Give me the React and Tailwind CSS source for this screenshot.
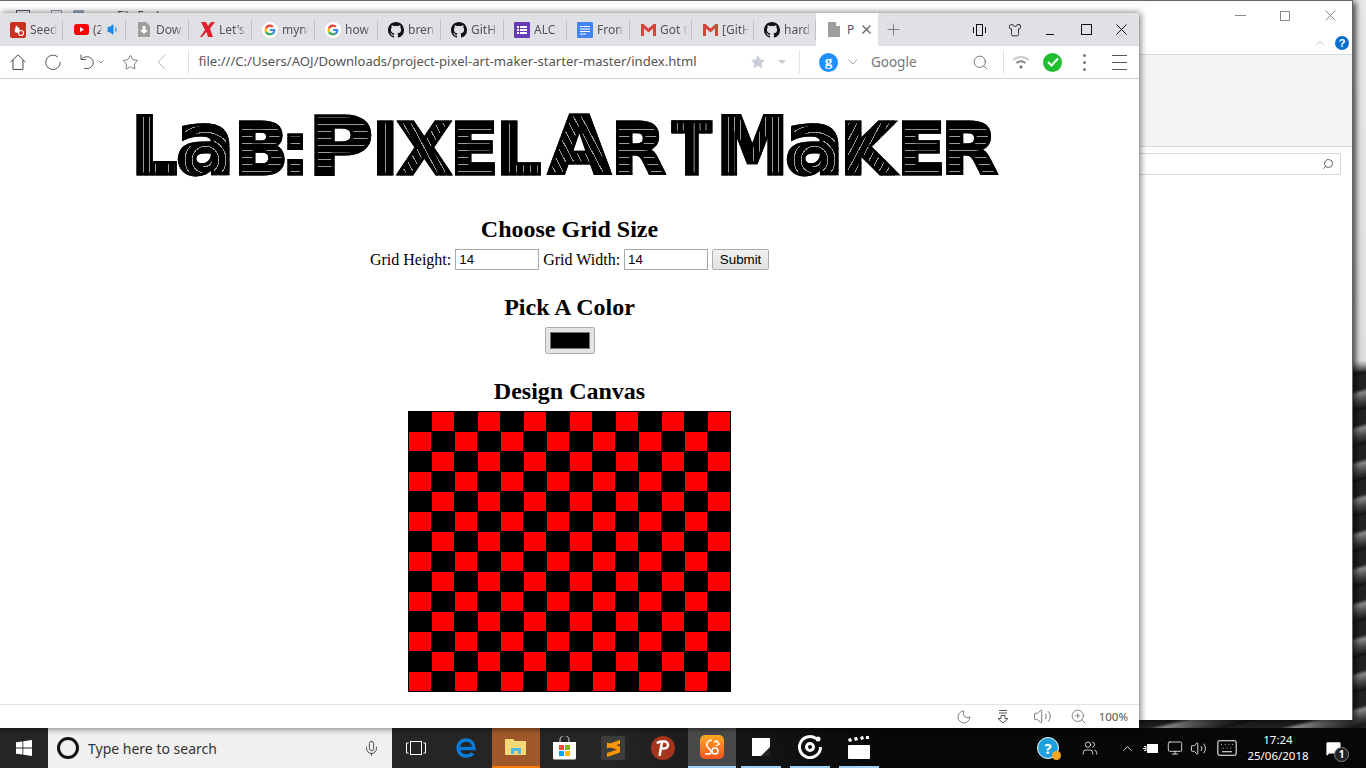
import React from "react";
import {
  Star, ChevronDown, ChevronUp, Search, Plus,
  Shirt, Moon, Volume1, Volume2, ZoomIn, Mic, Users, Keyboard, MessageSquare, Monitor,
} from "lucide-react";

function GoogleIcon() {
  return (
    <svg width="16" height="16" viewBox="0 0 24 24">
      <circle cx="12" cy="12" r="12" fill="#fff" />
      <path d="M20 12.200c0-.6 0-1.100-.1-1.600H12v3h4.500a3.900 3.900 0 0 1-1.700 2.500l2.700 2.100c1.600-1.400 2.500-3.500 2.500-6z" fill="#4285f4" />
      <path d="M12 20c2.200 0 4-.7 5.500-1.900l-2.700-2.100c-.7.500-1.700.8-2.800.8-2.100 0-3.900-1.400-4.600-3.400l-2.800 2.200C6 18.300 8.800 20 12 20z" fill="#34a853" />
      <path d="M7.400 13.400a4.800 4.800 0 0 1 0-3l-2.800-2.200a8 8 0 0 0 0 7.400z" fill="#fbbc05" />
      <path d="M12 7.200c1.200 0 2.300.4 3.100 1.200l2.400-2.400A8 8 0 0 0 4.600 8.300l2.800 2.200c.7-1.900 2.500-3.300 4.600-3.300z" fill="#ea4335" />
    </svg>
  );
}

function GithubIcon() {
  return (
    <svg width="16" height="16" viewBox="0 0 16 16" fill="#111">
      <path d="M8 0C3.580 0 0 3.580 0 8c0 3.540 2.290 6.530 5.470 7.590.4.070.55-.17.55-.38 0-.19-.01-.82-.01-1.490-2.010.37-2.530-.49-2.690-.94-.09-.23-.48-.94-.82-1.130-.28-.15-.68-.52-.01-.53.63-.01 1.080.58 1.230.82.720 1.210 1.870.870 2.330.660.070-.520.280-.870.510-1.070-1.780-.200-3.640-.890-3.640-3.950 0-.870.310-1.590.820-2.150-.080-.200-.360-1.020.080-2.120 0 0 .670-.210 2.200.820a7.500 7.500 0 0 1 4 0c1.530-1.040 2.200-.820 2.200-.820.440 1.100.160 1.920.080 2.120.510.560.820 1.270.820 2.150 0 3.070-1.870 3.750-3.650 3.950.290.250.540.730.540 1.480 0 1.070-.010 1.930-.010 2.200 0 .210.150.460.550.380A8.010 8.010 0 0 0 16 8c0-4.420-3.580-8-8-8z" />
    </svg>
  );
}

function GmailIcon() {
  return (
    <svg width="15" height="12" viewBox="0 0 15 12">
      <path d="M0 0h2.500L7.500 4.500 12.500 0H15v12h-3V4.500L7.500 8.500 3 4.500V12H0z" fill="#d44638" />
    </svg>
  );
}

function SeedrIcon() {
  return (
    <svg width="16" height="16" viewBox="0 0 16 16">
      <rect width="16" height="16" rx="2" fill="#c8321e" />
      <path d="M6 3c1 2 4 3 4 5a3 3 0 0 1-5 2c-1-2 1-4 1-7z" fill="#fff" />
      <circle cx="11" cy="11" r="2.500" fill="none" stroke="#fff" strokeWidth="1.200" />
    </svg>
  );
}

function YoutubeIcon() {
  return (
    <svg width="15" height="11" viewBox="0 0 15 11">
      <rect width="15" height="11" rx="3" fill="#f00" />
      <path d="M6 3l4 2.500L6 8z" fill="#fff" />
    </svg>
  );
}

function DownloadIcon() {
  return (
    <svg width="12" height="15" viewBox="0 0 12 15">
      <path d="M0 0h8l4 4v11H0z" fill="#9e9e9e" />
      <path d="M4.500 4h3v4H10l-4 4-4-4h2.500z" fill="#fff" />
    </svg>
  );
}

function LetsIcon() {
  return (
    <svg width="15" height="15" viewBox="0 0 15 15">
      <path d="M1 0h5l2 4 3-4h4l-5 6.500L13 15H8L6.500 10 2 15H0l5-7z" fill="#e0202c" />
    </svg>
  );
}

function ListIcon() {
  return (
    <svg width="16" height="16" viewBox="0 0 16 16">
      <rect width="16" height="16" rx="1" fill="#673ab7" />
      <path d="M3 4h2v2H3zM6 4h7v2H6zM3 7h2v2H3zM6 7h7v2H6zM3 10h2v2H3zM6 10h7v2H6z" fill="#fff" />
    </svg>
  );
}

function DocsIcon() {
  return (
    <svg width="16" height="16" viewBox="0 0 16 16">
      <rect width="16" height="16" rx="1" fill="#4285f4" />
      <path d="M3 4.500h10M3 7h10M3 9.500h10M3 12h6" stroke="#fff" />
    </svg>
  );
}

const tabs = [
  { label: "Seedr", icon: <SeedrIcon />, w: "w-[63px]" },
  { label: "(2", icon: <YoutubeIcon />, w: "w-[63px]", sound: true },
  { label: "Downl", icon: <DownloadIcon />, w: "w-[63px]" },
  { label: "Let's", icon: <LetsIcon />, w: "w-[63px]" },
  { label: "mynt", icon: <GoogleIcon />, w: "w-[63px]" },
  { label: "how", icon: <GoogleIcon />, w: "w-[63px]" },
  { label: "brend", icon: <GithubIcon />, w: "w-[63px]" },
  { label: "GitHu", icon: <GithubIcon />, w: "w-[63px]" },
  { label: "ALC", icon: <ListIcon />, w: "w-[63px]" },
  { label: "Front", icon: <DocsIcon />, w: "w-[63px]" },
  { label: "Got t", icon: <GmailIcon />, w: "w-[62px]" },
  { label: "[GitH", icon: <GmailIcon />, w: "w-[62px]" },
  { label: "hard", icon: <GithubIcon />, w: "w-[62px]" },
];

function Tab({ label, icon, sound, w }) {
  return (
    <div className={"h-full flex items-center shrink-0 relative pl-[10px] " + w}>
      <div className="w-4 flex items-center justify-center shrink-0">{icon}</div>
      <span className={"ml-[4px] overflow-hidden whitespace-nowrap text-[12px] text-[#555] [mask-image:linear-gradient(to_right,black_75%,transparent)] " + (sound ? "w-[9px]" : "w-[27px]")}>
        {label}
      </span>
      {sound && <Volume1 size={13} className="ml-[5px] text-[#1e88e5]" fill="#1e88e5" />}
      <div className="absolute right-0 top-[7px] h-[20px] w-px bg-[#bfc1c5]" />
    </div>
  );
}

// title letters: box width sets where the next letter starts, stripes run the way the strokes do
const H = "bg-[repeating-linear-gradient(0deg,#000_0,#000_6px,#999_6px,#999_7px)]";
const V = "bg-[repeating-linear-gradient(90deg,#000_0,#000_6px,#999_6px,#999_7px)]";
const D = "bg-[repeating-linear-gradient(62deg,#000_0,#000_6px,#999_6px,#999_7px)]";
const B = "bg-[repeating-linear-gradient(-62deg,#000_0,#000_6px,#999_6px,#999_7px)]";
const C = "bg-[repeating-radial-gradient(circle_at_50%_68%,#000_0,#000_6px,#999_6px,#999_7px)]";

const titleLetters = [
  { ch: "L", box: "w-[44.5px]", text: "text-[81px] scale-x-[0.9]", fill: V },
  { ch: "a", box: "w-[58.5px]", text: "text-[88px]", fill: C },
  { ch: "B", box: "w-[47px]", text: "text-[71px]", fill: H },
  { ch: ":", box: "w-[27px]", text: "text-[71px]", fill: H },
  { ch: "P", box: "w-[64px]", text: "text-[81px] scale-x-[1.1]", fill: H },
  { ch: "I", box: "w-[25px]", text: "text-[71px]", fill: V },
  { ch: "X", box: "w-[53px]", text: "text-[71px]", fill: D },
  { ch: "E", box: "w-[46px]", text: "text-[71px]", fill: H },
  { ch: "L", box: "w-[52px]", text: "text-[71px]", fill: V },
  { ch: "A", box: "w-[63px]", text: "text-[81px]", fill: D },
  { ch: "R", box: "w-[61px]", text: "text-[71px]", fill: H },
  { ch: "T", box: "w-[44px]", text: "text-[71px] scale-x-[0.82]", fill: V },
  { ch: "M", box: "w-[68.5px]", text: "text-[81px] scale-x-[0.9]", fill: V },
  { ch: "a", box: "w-[55.5px]", text: "text-[88px]", fill: C },
  { ch: "K", box: "w-[57px]", text: "text-[71px]", fill: B },
  { ch: "E", box: "w-[44px]", text: "text-[71px]", fill: H },
  { ch: "R", box: "w-[60px]", text: "text-[71px] scale-x-[1.04]", fill: H },
];

function Title() {
  return (
    <h1 className="w-full h-[88px] pl-[131px] flex items-baseline font-['DejaVu_Sans',sans-serif] font-bold leading-none">
      {titleLetters.map((l, i) => (
        <span key={i} className={"shrink-0 " + l.box}>
          <span className={"inline-block origin-left leading-none bg-clip-text text-transparent [-webkit-text-stroke:3px_#000] " + l.text + " " + l.fill}>
            {l.ch}
          </span>
        </span>
      ))}
    </h1>
  );
}

function Board() {
  const cells = [];
  for (let r = 0; r < 14; r++) {
    for (let c = 0; c < 14; c++) {
      cells.push(<div key={r + "-" + c} className={(r + c) % 2 ? "bg-[#f00]" : "bg-black"} />);
    }
  }
  return (
    <div className="grid grid-cols-[repeat(14,22px)] grid-rows-[repeat(14,19px)] gap-px p-px bg-black w-[323px] h-[281px] mx-auto">
      {cells}
    </div>
  );
}

function Page() {
  return (
    <div className="flex-1 bg-white flex flex-col items-center font-['Liberation_Serif',serif] text-black pt-[21px]">
      <Title />
      <h2 className="mt-[28px] text-[24px] font-bold leading-[27px]">Choose Grid Size</h2>
      <div className="mt-[6px] flex items-center h-[21px] text-[16px]">
        <span>Grid Height:</span>
        <input readOnly value="14" className="ml-[4px] w-[84px] h-[21px] border border-[#a9a9a9] px-[3px] text-[13.33px] font-['Liberation_Sans',sans-serif] outline-none" />
        <span className="ml-[4px]">Grid Width:</span>
        <input readOnly value="14" className="ml-[4px] w-[84px] h-[21px] border border-[#a9a9a9] px-[3px] text-[13.33px] font-['Liberation_Sans',sans-serif] outline-none" />
        <button className="ml-[4px] w-[57px] h-[21px] border border-[#adadad] rounded-[2px] bg-gradient-to-b from-[#f0f0f0] to-[#e2e2e2] text-[13.33px] font-['Liberation_Sans',sans-serif]">
          Submit
        </button>
      </div>
      <h2 className="mt-[24px] text-[24px] font-bold leading-[27px]">Pick A Color</h2>
      <div className="mt-[6px] w-[50px] h-[27px] border border-[#adadad] rounded-[2px] bg-[#e4e4e4] p-[4px]">
        <div className="w-full h-full bg-black border border-[#777]" />
      </div>
      <h2 className="mt-[24px] text-[24px] font-bold leading-[27px]">Design Canvas</h2>
      <div className="mt-[6px]">
        <Board />
      </div>
    </div>
  );
}

function Toolbar() {
  return (
    <div className="h-[33px] shrink-0 bg-white border-b border-[#cfcdcf] flex items-center text-[#444] pr-[12px]">
      <svg width="16" height="16" viewBox="0 0 16 16" fill="none" stroke="#444" className="ml-[10px]">
        <path d="M.5 8L8 .8 15.500 8M3 6v9.500h10V6" />
      </svg>
      <svg width="16" height="16" viewBox="0 0 16 16" fill="none" stroke="#555" className="ml-[19px]">
        <path d="M13 3a7.300 7.300 0 1 0 2.300 5" />
      </svg>
      <svg width="15" height="16" viewBox="0 0 15 16" fill="none" stroke="#555" className="ml-[19px]">
        <path d="M1 .5v5h5M1 5.500C3 3.500 5 2.500 7.500 2.800a5.800 5.800 0 0 1 0 11.700H4" />
      </svg>
      <ChevronDown size={8} className="ml-[2px]" />
      <Star size={17} strokeWidth={1} className="ml-[17px]" />
      <svg width="9" height="16" viewBox="0 0 9 16" fill="none" stroke="#bbb" className="ml-[18px]">
        <path d="M8.500.5L1 8l7.500 7.500" />
      </svg>
      <div className="ml-[22px] h-[24px] w-px bg-[#e2e2e4]" />
      <span className="ml-[10px] w-[555px] text-[13.1px] text-[#555] whitespace-nowrap">
        file:///C:/Users/AOJ/Downloads/project-pixel-art-maker-starter-master/index.html
      </span>
      <Star size={16} fill="#c9ccd6" strokeWidth={0} />
      <div className="ml-[12px] w-0 h-0 border-x-[4px] border-x-transparent border-t-[4px] border-t-[#ccc]" />
      <div className="ml-[13px] h-[24px] w-px bg-[#e2e2e4]" />
      <div className="ml-[19px] w-[19px] h-[19px] rounded-full bg-[#1e90ff] text-white flex items-center justify-center font-['Liberation_Serif',serif] font-bold text-[15px] leading-none pb-[2px]">
        g
      </div>
      <ChevronDown size={16} strokeWidth={1.200} className="ml-[7px] text-[#888]" />
      <span className="ml-[10px] w-[102px] text-[13.5px] text-[#777]">Google</span>
      <Search size={17} strokeWidth={1} />
      <div className="ml-[14px] h-[24px] w-px bg-[#e2e2e4]" />
      <svg width="18" height="14" viewBox="0 0 18 14" fill="none" className="ml-[8px]">
        <path d="M1 5a12 12 0 0 1 16 0" stroke="#ccc" strokeWidth="2" />
        <path d="M4.500 8a7 7 0 0 1 9 0" stroke="#888" strokeWidth="2" />
        <circle cx="9" cy="12" r="1.500" fill="#666" />
      </svg>
      <div className="ml-[13px] w-[19px] h-[19px] rounded-full bg-[#1fbf30] flex items-center justify-center">
        <svg width="12" height="10" viewBox="0 0 12 10" fill="none">
          <path d="M1 5l3.500 3.500L11 1.500" stroke="#fff" strokeWidth="2" />
        </svg>
      </div>
      <div className="ml-[21px] flex flex-col gap-[4px]">
        <div className="w-[3px] h-[3px] rounded-full bg-[#777]" />
        <div className="w-[3px] h-[3px] rounded-full bg-[#777]" />
        <div className="w-[3px] h-[3px] rounded-full bg-[#777]" />
      </div>
      <div className="ml-[26px] flex flex-col gap-[6px]">
        <div className="w-[15px] h-px bg-[#555]" />
        <div className="w-[15px] h-px bg-[#555]" />
        <div className="w-[15px] h-px bg-[#555]" />
      </div>
    </div>
  );
}

function TabBar() {
  return (
    <div className="h-[33px] shrink-0 bg-[#dfe1e5] flex items-stretch">
      {tabs.map((t, i) => (
        <Tab key={i} {...t} />
      ))}
      <div className="w-[62px] bg-white flex items-center pl-[12px] shrink-0">
        <svg width="12" height="15" viewBox="0 0 12 15">
          <path d="M0 0h8l4 4v11H0z" fill="#9e9e9e" />
          <path d="M8 0v4h4z" fill="#fff" />
        </svg>
        <span className="ml-[7px] w-[8px] text-[12px] text-[#555]">P</span>
        <svg width="9" height="9" viewBox="0 0 9 9" fill="none" stroke="#666" strokeWidth="1.300" className="ml-[7px]">
          <path d="M.5.5l8 8M8.500.5l-8 8" />
        </svg>
      </div>
      <Plus size={19} strokeWidth={1} className="ml-[6px] self-center text-[#666]" />
      <div className="ml-auto flex items-center text-[#111]">
        <svg width="13" height="12" viewBox="0 0 13 12" fill="none" stroke="#111">
          <rect x="3.500" y=".5" width="6" height="11" />
          <path d="M.5 3v6M12.500 3v6" />
        </svg>
        <Shirt size={14} strokeWidth={1.400} className="ml-[22px]" />
        <div className="ml-[24px] w-[8px] h-px bg-[#111] mt-[9px]" />
        <div className="ml-[27px] w-[11px] h-[11px] border border-[#111]" />
        <svg width="11" height="11" viewBox="0 0 11 11" fill="none" stroke="#111" className="ml-[24px] mr-[12px]">
          <path d="M.5.5l10 10M10.500.5l-10 10" />
        </svg>
      </div>
    </div>
  );
}

function StatusBar() {
  return (
    <div className="h-[24px] shrink-0 bg-white border-t border-[#e3e3e3] flex items-center justify-end pr-[11px] text-[#555]">
      <Moon size={16} strokeWidth={1.100} />
      <svg width="14" height="14" viewBox="0 0 14 14" fill="none" stroke="#555" className="ml-[24px]">
        <path d="M3 .5h8M3 3h8M5 5.500h4v3h3L7 13 2 8.500h3z" />
      </svg>
      <Volume2 size={19} strokeWidth={1} className="ml-[23px]" />
      <ZoomIn size={17} strokeWidth={1} className="ml-[18px]" />
      <span className="ml-[12px] text-[11.500px] text-[#555]">100%</span>
    </div>
  );
}

function Explorer() {
  return (
    <div className="absolute left-0 top-0 w-[1353px] h-[720px] bg-white border-t border-[#666] border-r shadow-[3px_2px_6px_rgba(0,0,0,0.7)] flex flex-col">
      <div className="h-[54px] border-b border-[#d9d9d9] text-[#888] flex flex-col">
        <div className="flex items-center justify-between h-[29px] pr-[3px]">
          <div className="flex items-center text-[11px] text-[#555] pl-[16px]">
            <div className="w-[14px] h-[12px] border border-[#557]" />
            <div className="ml-[21px] w-[11px] h-[12px] border border-[#99a]" />
            <div className="ml-[11px] w-[11px] h-[12px] bg-[#9ab]" />
            <span className="ml-[33px]">File Explorer</span>
          </div>
          <div className="flex items-center">
            <div className="w-[11px] h-px bg-[#888] mr-[34px]" />
            <div className="w-[10px] h-[10px] border border-[#888] mr-[35px]" />
            <svg width="11" height="11" viewBox="0 0 11 11" fill="none" stroke="#888" className="mr-[13px]">
              <path d="M.5.5l10 10M10.500.5l-10 10" />
            </svg>
          </div>
        </div>
        <div className="flex items-center justify-end pr-[3px] mt-[6px]">
          <ChevronUp size={14} strokeWidth={1.200} className="mr-[8px] text-[#aaa]" />
          <div className="w-[14px] h-[14px] rounded-full bg-[#0a6ed1] text-white text-[11px] font-bold flex items-center justify-center font-['Liberation_Sans',sans-serif]">
            ?
          </div>
        </div>
      </div>
      <div className="h-[92px] bg-[#f3f4f6] border-b border-[#d9d9d9]" />
      <div className="flex justify-end pt-[6px] pr-[11px]">
        <div className="w-[420px] h-[22px] border border-[#d9d9d9] bg-white flex items-center justify-end pr-[6px]">
          <Search size={12} strokeWidth={2} className="text-[#666] -scale-x-100" />
        </div>
      </div>
    </div>
  );
}

function Taskbar() {
  return (
    <div className="h-[40px] shrink-0 flex items-stretch text-white bg-gradient-to-r from-[#252525] from-45% to-[#070707] to-65% font-['Noto_Sans',sans-serif]">
      <div className="w-[48px] flex items-center justify-center">
        <svg width="16" height="16" viewBox="0 0 16 16" fill="#fff">
          <path d="M0 2.300l6.500-.9v6.200H0zM7.300 1.300L16 0v7.600H7.300zM0 8.400h6.500v6.200L0 13.700zM7.300 8.400H16V16l-8.700-1.300z" />
        </svg>
      </div>
      <div className="w-[344px] bg-[#f0f0f0] flex items-center text-[#333]">
        <div className="ml-[9px] w-[22px] h-[22px] rounded-full border-[3px] border-[#111]" />
        <span className="ml-[9px] flex-1 text-[14px]">Type here to search</span>
        <Mic size={17} strokeWidth={1.200} className="mr-[12px]" />
      </div>
      <div className="w-[48px] flex items-center justify-center">
        <svg width="20" height="14" viewBox="0 0 20 14" fill="none" stroke="#fff">
          <rect x="4.500" y=".5" width="11" height="13" />
          <path d="M2.500 2H.5v10h2M17.500 2h2v10h-2" />
        </svg>
      </div>
      <div className="w-[52px] flex items-center justify-center">
        <svg width="20" height="20" viewBox="0 0 20 20" fill="none" stroke="#0a7ad8" strokeWidth="3.500">
          <path d="M2 10.500h16c0-5-3-8.500-8-8.500s-8 4-8 8 3 8 8 8c3 0 5.500-1 7-2.500" />
        </svg>
      </div>
      <div className="w-[48px] bg-[#a0582a] border-b-[2px] border-[#f57c00] flex items-center justify-center">
        <svg width="22" height="18" viewBox="0 0 22 18">
          <path d="M0 1h8l2 2h11v14H0z" fill="#f6d775" />
          <path d="M6 16v-6h10v6h-3v-3H9v3z" fill="#4fb8e8" />
        </svg>
      </div>
      <div className="w-[48px] flex items-center justify-center">
        <svg width="23" height="24" viewBox="0 0 23 24">
          <path d="M7 7V4a4.500 4.500 0 0 1 9 0v3" fill="none" stroke="#ddd" />
          <path d="M0 6h23v16a1.500 1.500 0 0 1-1.500 1.500h-20A1.500 1.500 0 0 1 0 22z" fill="#fff" />
          <path d="M6 9h5v5H6z" fill="#f25022" />
          <path d="M12 9h5v5h-5z" fill="#7fba00" />
          <path d="M6 15h5v5H6z" fill="#00a4ef" />
          <path d="M12 15h5v5h-5z" fill="#ffb900" />
        </svg>
      </div>
      <div className="w-[50px] flex items-center justify-center">
        <div className="w-[24px] h-[24px] bg-[#3d3d3d] rounded-[2px] flex items-center justify-center">
          <svg width="13" height="17" viewBox="0 0 13 17" fill="#ff9800">
            <path d="M13 0v4L0 8.500v-4zM13 6.500v4L0 6.500v-4zM13 8.500v4L0 17v-4z" />
          </svg>
        </div>
      </div>
      <div className="w-[50px] flex items-center justify-center">
        <div className="w-[24px] h-[24px] rounded-full bg-[#a5351c] flex items-center justify-center">
          <svg width="14" height="16" viewBox="0 0 14 16" fill="none" stroke="#fff" strokeWidth="2.500">
            <path d="M1 3.500c1-1.500 2-2 5-2h2.500a3.500 3.500 0 0 1 0 7H5M6 2L3.500 16" />
          </svg>
        </div>
      </div>
      <div className="w-[48px] bg-[#4a4a4a] border-b-[2px] border-[#9fd0f5] flex items-center justify-center">
        <div className="w-[24px] h-[24px] rounded-[5px] bg-gradient-to-b from-[#ffa726] to-[#f4511e] flex items-center justify-center">
          <svg width="18" height="18" viewBox="0 0 18 18" fill="none" stroke="#fff" strokeWidth="1.500">
            <path d="M9 2C5 2 3 5 4 8c.7 2 3 3 4 5 .5 1 0 3-2 3H2" />
            <circle cx="12" cy="13" r="3" />
            <path d="M11 4l3-1 2 3-3 2" />
          </svg>
        </div>
      </div>
      <div className="ml-[5px] w-[40px] border-b-[2px] border-[#9fd0f5] flex items-center justify-center">
        <svg width="18" height="18" viewBox="0 0 18 18">
          <path d="M0 0h18v10l-8 8H0z" fill="#fff" />
          <path d="M9 18l9-9v9z" fill="#222" />
        </svg>
      </div>
      <div className="ml-[9px] w-[40px] border-b-[2px] border-[#9fd0f5] flex items-center justify-center">
        <svg width="24" height="24" viewBox="0 0 24 24" fill="none" stroke="#fff" strokeWidth="3">
          <path d="M18 3.500a10.500 10.500 0 1 0 4.500 8.500" />
          <circle cx="12" cy="12" r="3.500" />
          <circle cx="20" cy="4" r="1" fill="#fff" />
        </svg>
      </div>
      <div className="ml-[9px] w-[40px] border-b-[2px] border-[#9fd0f5] flex items-center justify-center">
        <svg width="22" height="23" viewBox="0 0 22 23" fill="#fff">
          <path d="M0 3l3-1 1 3-3 1zM6 1.500l3-.5 1 3-3 1zM12 1l3-1 1 3-3 1zM18 0l3 0 0 3-3 0z" />
          <rect x="0" y="9" width="22" height="14" rx="1" />
        </svg>
      </div>
      <div className="ml-auto flex items-center text-white">
        <div className="relative w-[22px] h-[22px] rounded-full bg-[#1ea0dc] border border-white flex items-center justify-center font-bold text-[15px] leading-none">
          ?
          <div className="absolute -right-[3px] -bottom-[2px] w-[9px] h-[9px] rounded-full bg-[#f5a623]" />
        </div>
        <Users size={16} strokeWidth={1.200} className="ml-[23px]" />
        <ChevronUp size={15} strokeWidth={1.400} className="ml-[22px]" />
        <svg width="16" height="11" viewBox="0 0 16 11" fill="none" stroke="#fff" className="ml-[8px]">
          <rect x="4.500" y="1.500" width="10" height="8" fill="#fff" />
          <path d="M0 5.500h3M1 3.500h2v4H1" />
        </svg>
        <Monitor size={16} strokeWidth={1.200} className="ml-[8px]" />
        <Volume2 size={17} strokeWidth={1.200} className="ml-[7px]" />
        <Keyboard size={22} strokeWidth={1.100} className="ml-[9px]" />
        <div className="ml-[5px] w-[70px] text-center text-[11.500px] leading-[16px]">
          <div>17:24</div>
          <div>25/06/2018</div>
        </div>
        <div className="relative ml-[12px] mr-[24px]">
          <MessageSquare size={17} fill="#fff" strokeWidth={0} />
          <div className="absolute -right-[7px] top-[7px] w-[15px] h-[15px] rounded-full bg-[#222] border border-[#888] text-[10px] font-bold flex items-center justify-center">
            1
          </div>
        </div>
      </div>
    </div>
  );
}

export default function App() {
  return (
    <div className="w-[1366px] h-[768px] overflow-hidden flex flex-col font-['Noto_Sans',sans-serif]">
      <div className="relative flex-1 bg-[linear-gradient(to_bottom,#e8e8e8_0,#e0e0e0_360px,transparent_372px),repeating-linear-gradient(165deg,#222_0,#222_14px,#888_18px,#444_26px,#111_34px)]">
        <Explorer />
        <div className="absolute left-0 top-[13px] w-[1139px] h-[715px] flex flex-col shadow-[1px_0_7px_rgba(0,0,0,0.6)]">
          <TabBar />
          <Toolbar />
          <Page />
          <StatusBar />
        </div>
      </div>
      <Taskbar />
    </div>
  );
}
